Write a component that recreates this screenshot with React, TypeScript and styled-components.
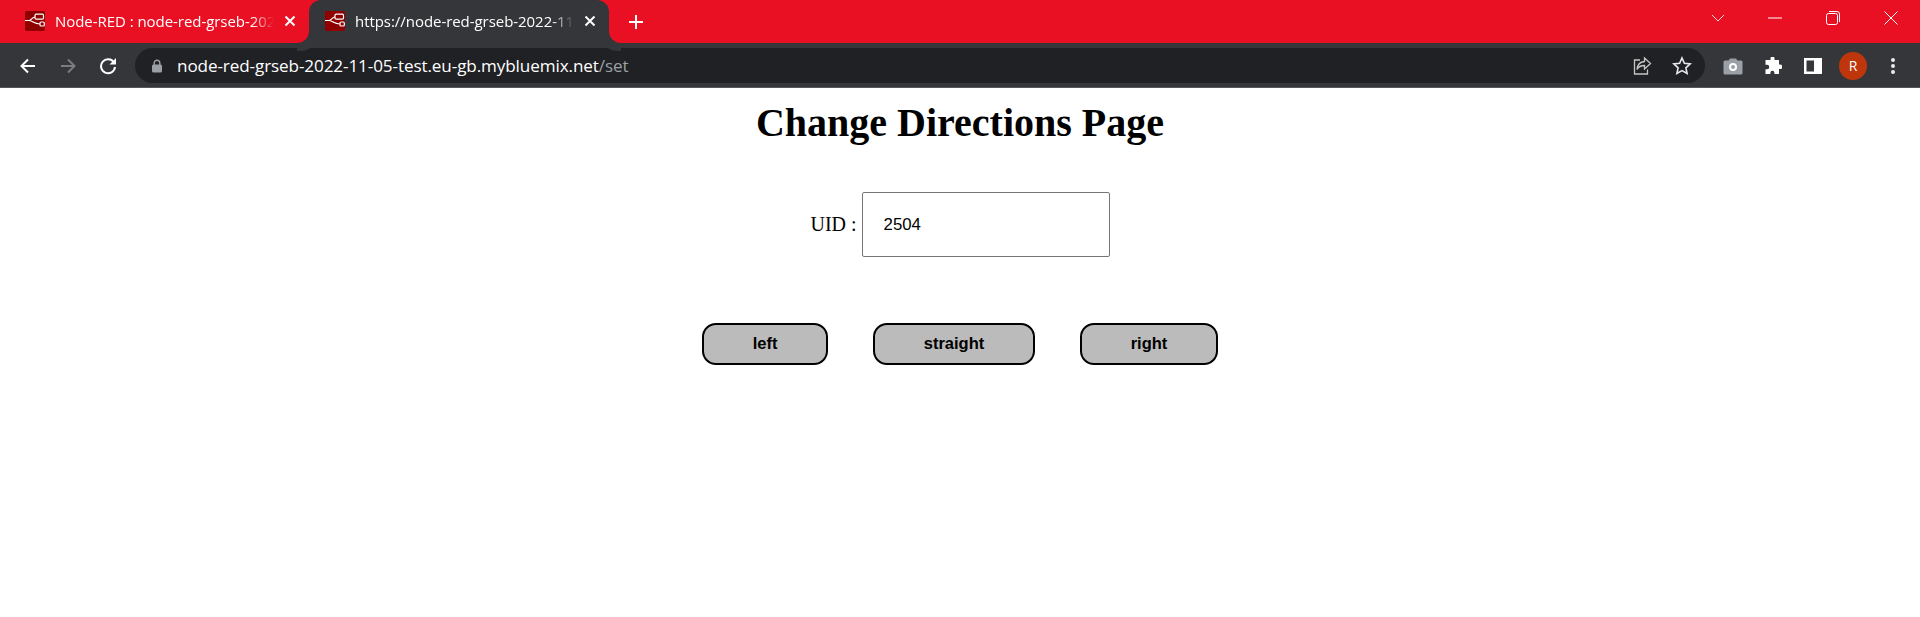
import React from 'react';
import styled, { createGlobalStyle } from 'styled-components';

const RED = '#e91024';
const CHROME = '#35363a';

const GlobalStyle = createGlobalStyle`
	html, body {
		margin: 0;
		padding: 0;
		background: #fff;
	}
`;

const Frame = styled.div`
	width: 1920px;
	height: 617px;
	overflow: hidden;
	display: flex;
	flex-direction: column;
`;

const TabStrip = styled.div`
	height: 43px;
	flex: none;
	background: ${RED};
	display: flex;
	align-items: flex-end;
	padding-left: 9px;
`;

const Tab = styled.div<{ $active?: boolean }>`
	position: relative;
	width: 300px;
	height: 43px;
	box-sizing: border-box;
	padding: 0 13px 1px 16px;
	display: flex;
	align-items: center;
	gap: 10px;
	border-radius: 12px 12px 0 0;
	background: ${(p) => (p.$active ? CHROME : 'transparent')};

	${(p) =>
		p.$active &&
		`
		&::before, &::after {
			content: '';
			position: absolute;
			bottom: 0;
			width: 12px;
			height: 12px;
			background: ${RED};
		}
		&::before {
			left: -12px;
			border-bottom-right-radius: 12px;
			box-shadow: 4px 4px 0 4px ${CHROME};
		}
		&::after {
			right: -12px;
			border-bottom-left-radius: 12px;
			box-shadow: -4px 4px 0 4px ${CHROME};
		}
	`}
`;

const TabTitle = styled.span`
	flex: 1;
	min-width: 0;
	overflow: hidden;
	white-space: nowrap;
	font: 15px 'Open Sans', 'Noto Sans', sans-serif;
	letter-spacing: -0.05px;
	color: #fff;
	mask-image: linear-gradient(to right, #000 calc(100% - 22px), transparent);
`;

const NewTab = styled.div`
	width: 32px;
	height: 42px;
	margin-left: 11px;
	display: flex;
	align-items: center;
	justify-content: center;
`;

const WindowControls = styled.div`
	margin-left: auto;
	height: 43px;
	display: flex;
	align-items: flex-start;
`;

const WindowButton = styled.div<{ $w: number }>`
	width: ${(p) => p.$w}px;
	height: 36px;
	display: flex;
	align-items: center;
	justify-content: center;
`;

const Toolbar = styled.div`
	height: 45px;
	flex: none;
	box-sizing: border-box;
	background: ${CHROME};
	border-bottom: 1px solid #55565a;
	display: flex;
	align-items: center;
	padding: 1px 8px 0 8px;
`;

const NavButton = styled.div`
	width: 40px;
	height: 32px;
	display: flex;
	align-items: center;
	justify-content: center;
	flex: none;
`;

const Omnibox = styled.div`
	width: 1570px;
	height: 35px;
	margin: 0 8px 0 7px;
	flex: none;
	box-sizing: border-box;
	border-radius: 18px;
	background: #202124;
	display: flex;
	align-items: center;
	padding: 0 3px 0 16px;
`;

const Url = styled.div`
	flex: 1;
	margin-left: 14px;
	font: 17.1px 'Open Sans', 'Noto Sans', sans-serif;
	letter-spacing: -0.1px;
	color: #fff;
	white-space: nowrap;
`;

const UrlPath = styled.span`
	color: #9aa0a6;
`;

const Avatar = styled.div`
	width: 28px;
	height: 28px;
	border-radius: 50%;
	background: #bf360c;
	color: #fff;
	font: 14px 'Open Sans', sans-serif;
	display: flex;
	align-items: center;
	justify-content: center;
`;

const Page = styled.main`
	flex: 1;
	background: #fff;
	display: flex;
	flex-direction: column;
	align-items: center;
	font-family: 'Liberation Serif', 'Times New Roman', serif;
	color: #000;
`;

const Heading = styled.h1`
	margin: 6px 0 0;
	font-size: 40px;
	line-height: 57px;
	font-weight: 700;
`;

const UidRow = styled.div`
	margin-top: 41px;
	display: flex;
	align-items: center;
	gap: 5px;
`;

const UidLabel = styled.label`
	font-size: 20px;
`;

const UidInput = styled.input`
	width: 248px;
	height: 65px;
	box-sizing: border-box;
	padding: 0 21px;
	border: 1px solid #767676;
	border-radius: 2px;
	outline: none;
	background: #fff;
	color: #000;
	font: 16.8px 'Liberation Sans', Arial, sans-serif;
`;

const ButtonRow = styled.div`
	margin-top: 66px;
	display: flex;
	gap: 45px;
`;

const DirectionButton = styled.button<{ $w: number }>`
	width: ${(p) => p.$w}px;
	height: 42px;
	box-sizing: border-box;
	padding: 0 0 2px;
	border: 2px solid #000;
	border-radius: 14px;
	background: #bbb;
	color: #000;
	font: bold 16.5px 'Liberation Sans', Arial, sans-serif;
`;

const NodeRedIcon = () => (
	<svg width="20" height="20" viewBox="0 0 20 20" style={{ flex: 'none' }}>
		<rect width="20" height="20" rx="2" fill="#8f0000" />
		<g fill="none" stroke="#fff" strokeWidth="1.2">
			<path d="M0 9.500h4c2.500 0 3-3.500 6-3.500" />
			<path d="M4 9.500c3 0 5 3.500 11 3.500" />
			<rect x="10" y="3.200" width="8.500" height="5" rx="1.200" />
			<rect x="15" y="11" width="4.300" height="4" rx="1" />
		</g>
	</svg>
);

const CloseX = () => (
	<svg width="12" height="12" viewBox="0 0 12 12" style={{ flex: 'none' }}>
		<path d="M1.500 1.500l9 9M10.500 1.500l-9 9" stroke="#fff" strokeWidth="2" />
	</svg>
);

const App = () => (
	<Frame>
		<GlobalStyle />
		<TabStrip>
			<Tab>
				<NodeRedIcon />
				<TabTitle>Node-RED : node-red-grseb-2022-11-05-test</TabTitle>
				<CloseX />
			</Tab>
			<Tab $active>
				<NodeRedIcon />
				<TabTitle>https://node-red-grseb-2022-11-05-test.eu-gb</TabTitle>
				<CloseX />
			</Tab>
			<NewTab>
				<svg width="16" height="16" viewBox="0 0 16 16">
					<path d="M8 1v14M1 8h14" stroke="#fff" strokeWidth="2" />
				</svg>
			</NewTab>
			<WindowControls>
				<WindowButton $w={56}>
					<svg width="14" height="8" viewBox="0 0 14 8">
						<path d="M1 1l6 6 6-6" fill="none" stroke="#fff" strokeOpacity="0.85" />
					</svg>
				</WindowButton>
				<WindowButton $w={58}>
					<svg width="14" height="2" viewBox="0 0 14 2">
						<path d="M0 1h14" stroke="#fff" />
					</svg>
				</WindowButton>
				<WindowButton $w={58}>
					<svg width="14" height="14" viewBox="0 0 14 14">
						<rect x="0.5" y="2.5" width="11" height="11" rx="2" fill="none" stroke="#fff" />
						<path d="M3 0.5h8a2.500 2.500 0 0 1 2.500 2.500v8" fill="none" stroke="#fff" />
					</svg>
				</WindowButton>
				<WindowButton $w={58}>
					<svg width="14" height="14" viewBox="0 0 14 14">
						<path d="M0.500 0.500l13 13M13.500 0.500l-13 13" stroke="#fff" />
					</svg>
				</WindowButton>
			</WindowControls>
		</TabStrip>
		<Toolbar>
			<NavButton>
				<svg width="18" height="18" viewBox="0 0 18 18">
					<path d="M16 9H3M9 2.500L2.500 9 9 15.500" fill="none" stroke="#fff" strokeWidth="2" />
				</svg>
			</NavButton>
			<NavButton>
				<svg width="18" height="18" viewBox="0 0 18 18">
					<path d="M2 9h13M9 2.500L15.500 9 9 15.500" fill="none" stroke="#7b7c7f" strokeWidth="2" />
				</svg>
			</NavButton>
			<NavButton>
				<svg width="18" height="18" viewBox="0 0 18 18">
					<path d="M15 5.500A7 7 0 1 0 16 10" fill="none" stroke="#fff" strokeWidth="2" />
					<path d="M17 1v6.500h-6.500z" fill="#fff" />
				</svg>
			</NavButton>
			<Omnibox>
				<svg width="12" height="14" viewBox="0 0 12 14" style={{ flex: 'none' }}>
					<rect x="1" y="5.500" width="10" height="8" rx="1.500" fill="#9aa0a6" />
					<path d="M3.200 6V4a2.800 2.800 0 0 1 5.600 0v2" fill="none" stroke="#9aa0a6" strokeWidth="1.400" />
				</svg>
				<Url>
					node-red-grseb-2022-11-05-test.eu-gb.mybluemix.net<UrlPath>/set</UrlPath>
				</Url>
				<NavButton>
					<svg width="20" height="20" viewBox="0 0 20 20">
						<path d="M8 4H2.500v14h13v-4.500" fill="none" stroke="#c4c7c5" strokeWidth="1.300" />
						<path d="M12.500 2l6 5.500-6 5.500V9.500c-3.500 0-6 1-7.500 4 .3-4.500 3-7.500 7.500-8z" fill="none" stroke="#c4c7c5" strokeWidth="1.300" />
					</svg>
				</NavButton>
				<NavButton>
					<svg width="20" height="20" viewBox="0 0 20 20">
						<path d="M10 2l2.400 5.300 5.800.6-4.300 3.900 1.200 5.700L10 14.600l-5.100 2.900 1.200-5.700L1.800 7.900l5.800-.6z" fill="none" stroke="#e8eaed" strokeWidth="1.600" />
					</svg>
				</NavButton>
			</Omnibox>
			<NavButton>
				<svg width="20" height="18" viewBox="0 0 20 18">
					<path d="M2 3.500h3.500L7 1.500h6l1.500 2H18a1.500 1.500 0 0 1 1.500 1.500v11a1.500 1.500 0 0 1-1.500 1.500H2A1.500 1.500 0 0 1 .5 16V5A1.500 1.500 0 0 1 2 3.500z" fill="#9aa0a6" />
					<circle cx="10" cy="10" r="3" fill="none" stroke="#fff" strokeWidth="2" />
				</svg>
			</NavButton>
			<NavButton>
				<svg width="18" height="18" viewBox="0 0 18 18">
					<path d="M6.500 1.500a2 2 0 0 1 4 0V3H15v4.500h1a2.300 2.300 0 0 1 0 4.600h-1V17h-4.600v-1.200a2 2 0 0 0-4 0V17H1.500v-4.700H3a2.300 2.300 0 0 0 0-4.600H1.500V3h5z" fill="#fff" />
				</svg>
			</NavButton>
			<NavButton>
				<svg width="18" height="16" viewBox="0 0 18 16">
					<path fillRule="evenodd" d="M0 0h18v16H0zM2.500 2.500v11H10v-11z" fill="#fff" />
				</svg>
			</NavButton>
			<NavButton>
				<Avatar>R</Avatar>
			</NavButton>
			<NavButton>
				<svg width="4" height="16" viewBox="0 0 4 16">
					<circle cx="2" cy="2" r="2" fill="#e8eaed" />
					<circle cx="2" cy="8" r="2" fill="#e8eaed" />
					<circle cx="2" cy="14" r="2" fill="#e8eaed" />
				</svg>
			</NavButton>
		</Toolbar>
		<Page>
			<Heading>Change Directions Page</Heading>
			<UidRow>
				<UidLabel htmlFor="uid">UID :</UidLabel>
				<UidInput id="uid" defaultValue="2504" />
			</UidRow>
			<ButtonRow>
				<DirectionButton $w={126}>left</DirectionButton>
				<DirectionButton $w={162}>straight</DirectionButton>
				<DirectionButton $w={138}>right</DirectionButton>
			</ButtonRow>
		</Page>
	</Frame>
);

export default App;
